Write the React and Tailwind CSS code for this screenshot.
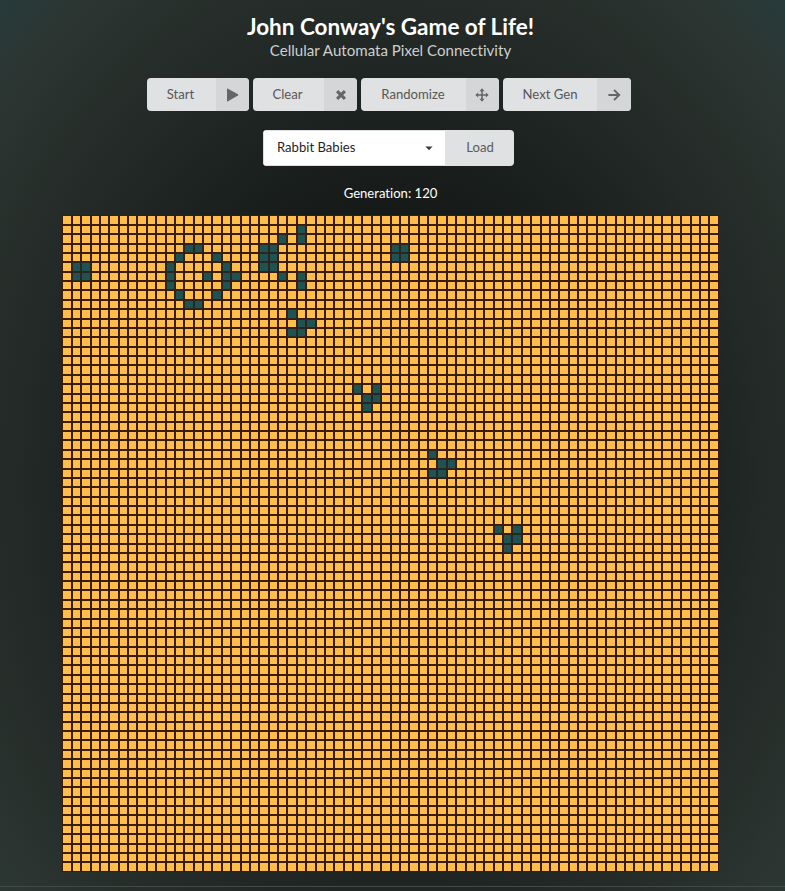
import React from "react";

const SIZE = 70;

// Live cells as [row, columns]
const LIVE = [
  [1, [25]],
  [2, [23, 25]],
  [3, [13, 14, 21, 22, 35, 36]],
  [4, [12, 16, 21, 22, 35, 36]],
  [5, [1, 2, 11, 17, 21, 22]],
  [6, [1, 2, 11, 15, 17, 18, 23, 25]],
  [7, [11, 17, 25]],
  [8, [12, 16]],
  [9, [13, 14]],
  [10, [24]],
  [11, [25, 26]],
  [12, [24, 25]],
  [18, [31, 33]],
  [19, [32, 33]],
  [20, [32]],
  [25, [39]],
  [26, [40, 41]],
  [27, [39, 40]],
  [33, [46, 48]],
  [34, [47, 48]],
  [35, [47]],
];
const live = new Set(LIVE.flatMap(([r, cs]) => cs.map((c) => r * SIZE + c)));

const PlayIcon = () => (
  <svg width="13" height="14" viewBox="0 0 13 14" fill="currentColor">
    <path d="M1 1.2Q1 .2 2 .7L12 6.3Q12.9 7 12 7.6L2 13.3Q1 13.8 1 12.8Z" />
  </svg>
);
const CloseIcon = () => (
  <svg width="12" height="12" viewBox="0 0 12 12" stroke="currentColor" strokeWidth="3.1">
    <path d="M2.1 2.1L9.9 9.9M9.9 2.1L2.1 9.9" />
  </svg>
);
const MoveIcon = () => (
  <svg width="14" height="14" viewBox="0 0 14 14" fill="currentColor">
    <path d="M7 .3L9.6 3.2H7.8V6.2H10.8V4.4L13.7 7L10.8 9.6V7.8H7.8V10.8H9.6L7 13.7L4.4 10.8H6.2V7.8H3.2V9.6L.3 7L3.2 4.4V6.2H6.2V3.2H4.4Z" />
  </svg>
);
const ArrowIcon = () => (
  <svg width="14" height="14" viewBox="0 0 14 14" fill="none" stroke="currentColor" strokeWidth="1.9">
    <path d="M1.4 7H12M7 1.8L12.2 7L7 12.2" />
  </svg>
);

function ActionButton({ label, width, labelPad, iconBox, Icon }) {
  return (
    <button className={`flex h-[33px] overflow-hidden rounded-[4px] bg-[#e0e1e2] text-[13.1px] text-[#565758] ${width}`}>
      <span className={`flex h-full flex-1 items-center justify-center ${labelPad}`}>{label}</span>
      <span className={`flex h-full items-center justify-center bg-[#d5d6d7] text-[#656667] ${iconBox}`}>
        <Icon />
      </span>
    </button>
  );
}

export default function App() {
  return (
    <div className="h-[891px] w-[785px] overflow-hidden bg-[radial-gradient(555px_680px_at_392px_481px,#040505_0%,#2c3531_89%,#243f40_106%)] font-['Lato',sans-serif] text-white [font-variant-ligatures:none]">
      <div className="pr-[4px]">
        <header className="flex flex-col items-center pt-[12px]">
          <h1 className="text-[22.5px] leading-[29px] font-bold whitespace-nowrap">John Conway's Game of Life!</h1>
          <p className="text-[15.1px] leading-[19px] whitespace-nowrap text-[#cdcfce]">Cellular Automata Pixel Connectivity</p>
        </header>

        <div className="mt-[18px] ml-[147px] flex gap-[4px]">
          <ActionButton label="Start" width="w-[102px]" labelPad="pr-[2px]" iconBox="w-[33px]" Icon={PlayIcon} />
          <ActionButton label="Clear" width="w-[104px]" labelPad="pr-[2px]" iconBox="w-[33px]" Icon={CloseIcon} />
          <ActionButton label="Randomize" width="w-[138px]" labelPad="pr-[1px]" iconBox="w-[33px] pr-[1px]" Icon={MoveIcon} />
          <ActionButton label="Next Gen" width="w-[128px]" labelPad="" iconBox="w-[34px]" Icon={ArrowIcon} />
        </div>

        <div className="mt-[19px] ml-[263px] flex h-[36px] w-[251px] overflow-hidden rounded-[4px] text-[13.1px]">
          <div className="flex w-[182px] shrink-0 items-center justify-between border-y border-l border-[#dededf] bg-white pr-[12px] pl-[13px] text-[#1f1f1f]">
            <span>Rabbit Babies</span>
            <svg width="8" height="5" viewBox="0 0 8 5" fill="#3c3c3c">
              <path d="M.4 .5H7.6L4 4.3Z" />
            </svg>
          </div>
          <button className="flex flex-1 items-center justify-center bg-[#e0e1e2] pl-[1px] text-[#5a5b5c]">Load</button>
        </div>

        <p className="mt-[18px] text-center text-[13.1px] leading-[19px]">Generation: 120</p>

        <main className="mx-auto mt-[12.4px] w-[656.25px]">
          {Array.from({ length: SIZE }, (_, r) => (
            <div key={r} className="flex h-[9.375px]">
              {Array.from({ length: SIZE }, (_, c) => (
                <div
                  key={c}
                  className={
                    live.has(r * SIZE + c)
                      ? "w-[9.375px] border border-[#2b2523] bg-[#1f5352]"
                      : "w-[9.375px] border border-[#3a1b0c] bg-[#ffbd4a]"
                  }
                />
              ))}
            </div>
          ))}
        </main>
      </div>
      <hr className="mt-[14px] border-t border-[#414a47]" />
    </div>
  );
}
